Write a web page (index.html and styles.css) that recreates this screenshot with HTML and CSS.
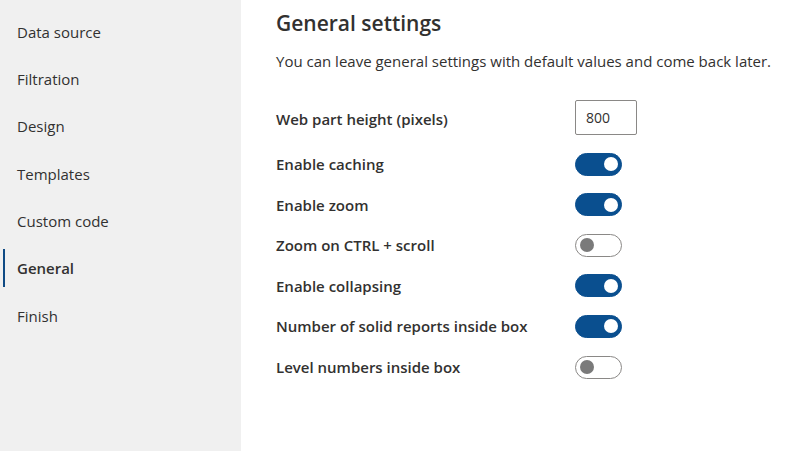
FILE: index.html
```html
<!DOCTYPE html>
<html>
<head>
<meta charset="utf-8">
<link rel="stylesheet" href="styles.css">
</head>
<body>
<div class="app">
  <nav class="sidebar">
    <div class="nav-item">Data source</div>
    <div class="nav-item">Filtration</div>
    <div class="nav-item">Design</div>
    <div class="nav-item">Templates</div>
    <div class="nav-item">Custom code</div>
    <div class="nav-item active">General</div>
    <div class="nav-item">Finish</div>
  </nav>
  <main class="content">
    <h1 class="title">General settings</h1>
    <p class="desc">You can leave general settings with default values and come back later.</p>
    <div class="form">
      <div class="row input-row">
        <label class="label">Web part height (pixels)</label>
        <div class="field"><input class="num" type="text" value="800"></div>
      </div>
      <div class="row">
        <label class="label">Enable caching</label>
        <div class="field"><span class="toggle on"><span class="thumb"></span></span></div>
      </div>
      <div class="row">
        <label class="label">Enable zoom</label>
        <div class="field"><span class="toggle on"><span class="thumb"></span></span></div>
      </div>
      <div class="row">
        <label class="label">Zoom on CTRL + scroll</label>
        <div class="field"><span class="toggle"><span class="thumb"></span></span></div>
      </div>
      <div class="row">
        <label class="label">Enable collapsing</label>
        <div class="field"><span class="toggle on"><span class="thumb"></span></span></div>
      </div>
      <div class="row">
        <label class="label">Number of solid reports inside box</label>
        <div class="field"><span class="toggle on"><span class="thumb"></span></span></div>
      </div>
      <div class="row">
        <label class="label">Level numbers inside box</label>
        <div class="field"><span class="toggle"><span class="thumb"></span></span></div>
      </div>
    </div>
  </main>
</div>
</body>
</html>
```
FILE: styles.css
```css
html, body {
  margin: 0;
  padding: 0;
  height: 100%;
  background: #ffffff;
  font-family: "Open Sans", "Noto Sans", sans-serif;
  color: #323130;
}
.app {
  display: flex;
  height: 451px;
}
.sidebar {
  width: 241px;
  flex: none;
  background: #f0f0f0;
  padding-top: 8px;
  box-sizing: border-box;
}
.nav-item {
  position: relative;
  height: 47.33px;
  display: flex;
  align-items: center;
  padding-left: 17px;
  font-size: 15px;
  color: #323130;
}
.nav-item.active {
  font-weight: 600;
}
.nav-item.active::before {
  content: "";
  position: absolute;
  left: 3px;
  top: 4px;
  bottom: 5px;
  width: 2px;
  background: #0f4a84;
}
.content {
  flex: 1;
  padding-left: 35px;
  padding-top: 0;
}
.title {
  margin: 8px 0 0 0;
  font-size: 21px;
  font-weight: 600;
  line-height: 30px;
  color: #323130;
}
.desc {
  margin: 15px 0 0 0;
  font-size: 15px;
  line-height: 16px;
  color: #323130;
}
.form {
  margin-top: 31px;
  display: flex;
  flex-direction: column;
  gap: 17.6px;
}
.row {
  display: grid;
  grid-template-columns: 299px auto;
  align-items: center;
}
.label {
  font-size: 15px;
  font-weight: 600;
  color: #323130;
}
.input-row .label {
  padding-top: 3px;
}
.num {
  width: 62px;
  height: 35px;
  box-sizing: border-box;
  border: 1px solid #8a8886;
  border-radius: 2px;
  padding: 0 10px;
  font-family: inherit;
  font-size: 14px;
  color: #323130;
  outline: none;
}
.toggle {
  display: block;
  width: 47px;
  height: 23px;
  box-sizing: border-box;
  border-radius: 12px;
  border: 1px solid #8a8886;
  background: #fff;
  position: relative;
}
.toggle .thumb {
  position: absolute;
  top: 3.5px;
  left: 3.5px;
  width: 14px;
  height: 14px;
  border-radius: 50%;
  background: #7a7a7a;
}
.toggle.on {
  background: #0a4f8f;
  border-color: #0a4f8f;
}
.toggle.on .thumb {
  left: auto;
  right: 3.5px;
  background: #fff;
}
```
